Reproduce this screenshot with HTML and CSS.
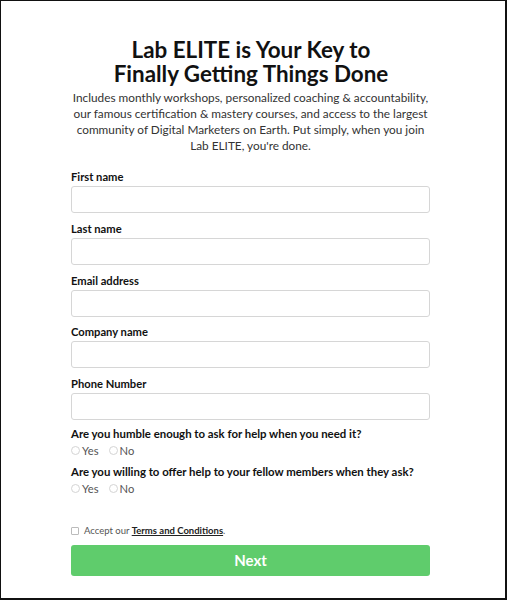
FILE: index.html
```html
<!DOCTYPE html>
<html lang="en">
<head>
<meta charset="utf-8">
<title>Lab ELITE</title>
<link rel="stylesheet" href="styles.css">
</head>
<body>
<div class="frame">
  <div class="content">
    <h1 class="title">Lab ELITE is Your Key to<br>Finally Getting Things Done</h1>
    <p class="intro">Includes monthly workshops, personalized coaching &amp; accountability,<br>our famous certification &amp; mastery courses, and access to the largest<br>community of Digital Marketers on Earth. Put simply, when you join<br>Lab ELITE, you're done.</p>
    <form class="form">
      <div class="field">
        <label class="label">First name</label>
        <input class="input" type="text">
      </div>
      <div class="field">
        <label class="label">Last name</label>
        <input class="input" type="text">
      </div>
      <div class="field">
        <label class="label">Email address</label>
        <input class="input" type="text">
      </div>
      <div class="field">
        <label class="label">Company name</label>
        <input class="input" type="text">
      </div>
      <div class="field">
        <label class="label">Phone Number</label>
        <input class="input" type="text">
      </div>
      <div class="question first">
        <div class="q-text">Are you humble enough to ask for help when you need it?</div>
        <div class="options">
          <span class="option"><span class="radio"></span>Yes</span>
          <span class="option"><span class="radio"></span>No</span>
        </div>
      </div>
      <div class="question">
        <div class="q-text">Are you willing to offer help to your fellow members when they ask?</div>
        <div class="options">
          <span class="option"><span class="radio"></span>Yes</span>
          <span class="option"><span class="radio"></span>No</span>
        </div>
      </div>
      <div class="terms">
        <span class="checkbox"></span>
        <span>Accept our <a class="terms-link">Terms and Conditions</a>.</span>
      </div>
      <div class="button">Next</div>
    </form>
  </div>
</div>
</body>
</html>
```
FILE: styles.css
```css
html, body {
  margin: 0;
  padding: 0;
  background: #ffffff;
}
.frame {
  box-sizing: border-box;
  width: 507px;
  height: 600px;
  border-top: 1px solid #111;
  border-left: 1px solid #111;
  border-right: 2px solid #111;
  border-bottom: 2px solid #111;
  font-family: Lato, "Open Sans", sans-serif;
  color: #222;
  overflow: hidden;
}
.content {
  width: 359px;
  margin-left: 70px;
  padding-top: 37px;
}
.title {
  margin: 0 0 0 -30px;
  width: 420px;
  font-size: 22.4px;
  line-height: 24px;
  font-weight: 700;
  text-align: center;
  color: #111;
}
.intro {
  margin: 4px -40px 0 -40px;
  font-size: 11.8px;
  line-height: 16px;
  text-align: center;
  color: #333;
}
.form {
  margin-top: 15px;
}
.field {
  display: flex;
  flex-direction: column;
  margin-bottom: 7.75px;
}
.label {
  font-size: 11.2px;
  font-weight: 700;
  line-height: 15px;
  color: #111;
  margin-bottom: 2px;
}
.input {
  box-sizing: border-box;
  width: 359px;
  height: 27px;
  border: 1px solid #d6d6d6;
  border-radius: 3px;
  margin: 0;
  padding: 0 8px;
  background: #fff;
}
.question {
  margin-top: 0;
}
.question.first {
  margin-top: -2px;
}
.q-text {
  font-size: 11.4px;
  font-weight: 700;
  line-height: 15px;
  color: #111;
}
.options {
  display: flex;
  gap: 10px;
  margin-top: 2px;
  margin-bottom: 5px;
  font-size: 11.2px;
  line-height: 16px;
  color: #555;
}
.option {
  display: flex;
  align-items: center;
  gap: 2px;
}
.radio {
  box-sizing: border-box;
  width: 9px;
  height: 9px;
  border: 1px solid #d4d4d4;
  border-radius: 50%;
}
.terms {
  display: flex;
  align-items: center;
  gap: 5px;
  margin-top: 27px;
  font-size: 9.5px;
  line-height: 14px;
  color: #555;
}
.checkbox {
  box-sizing: border-box;
  width: 8px;
  height: 8px;
  border: 1px solid #bbb;
  border-radius: 1px;
}
.terms-link {
  color: #222;
  font-weight: 700;
  text-decoration: underline;
}
.button {
  margin-top: 7px;
  height: 31px;
  line-height: 31px;
  background: #5fcc6c;
  border-radius: 3px;
  text-align: center;
  color: #fff;
  font-size: 15px;
  font-weight: 700;
}
```
